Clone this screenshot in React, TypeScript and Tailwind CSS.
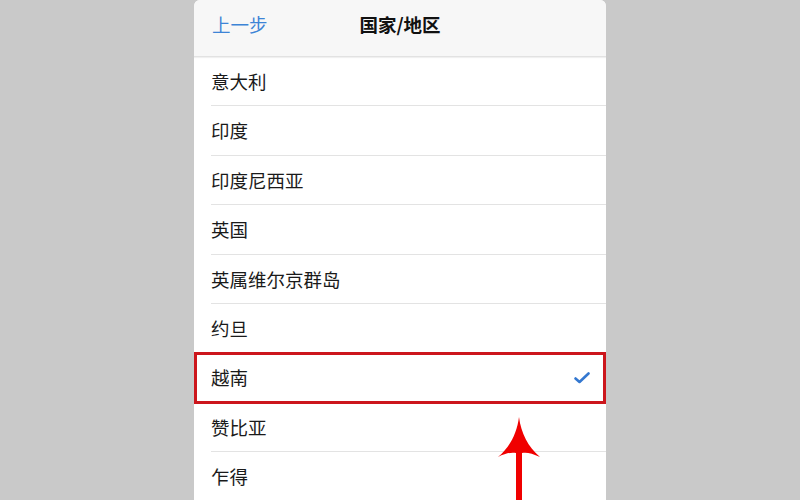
import React from "react";

const rows = ["意大利", "印度", "印度尼西亚", "英国", "英属维尔京群岛", "约旦", "越南", "赞比亚", "乍得"];

export default function App() {
  return (
    <div
      className="w-[800px] h-[500px] bg-[#c9c9c9] flex justify-center overflow-hidden"
      style={{ fontFamily: '"Noto Sans CJK SC", "Noto Sans", sans-serif' }}
    >
      <div className="w-[412px] h-[500px] bg-white flex flex-col rounded-t-[6px] overflow-hidden relative">
        <div className="h-[57px] shrink-0 bg-[#f7f7f7] border-b border-[#e2e2e2] shadow-[0_1px_1px_rgba(0,0,0,0.06)] relative flex items-center px-[18px]">
          <span className="text-[18.5px] text-[#3d84d6] leading-none -mt-[7px]">上一步</span>
          <span className="absolute left-0 right-0 text-center text-[18.5px] font-bold text-[#111] leading-none -mt-[7px]">国家/地区</span>
        </div>
        <div className="flex flex-col">
          {rows.map((r) => (
            <div key={r} className="relative h-[49.4px] shrink-0 pl-[17px] flex items-center">
              <span className="text-[18.5px] text-[#1a1a1a] leading-none -mt-[1px]">{r}</span>
              <div className="absolute left-[17px] right-0 bottom-0 h-px bg-[#e3e3e3]" />
              {r === "越南" && (
                <>
                  <svg className="absolute right-[16px] top-[19px]" width="16" height="12" viewBox="0 0 16 12">
                    <path d="M1.5 6.5 L5.5 10 L14.5 1.5" fill="none" stroke="#3478d0" strokeWidth="2.6" strokeLinecap="round" strokeLinejoin="round" />
                  </svg>
                  <div className="absolute left-0 right-0 -top-[1px] -bottom-[1px] border-[3px] border-[#cc161c]" />
                </>
              )}
            </div>
          ))}
        </div>
        <svg className="absolute left-[302px] top-[415px]" width="46" height="85" viewBox="0 0 46 85">
          <path d="M23 2 C 21 18, 14 32, 2 42 C 10 38, 16 37, 20 38 L20 85 L26 85 L26 38 C 30 37, 36 38, 44 42 C 32 32, 25 18, 23 2 Z" fill="#f00000" />
        </svg>
      </div>
    </div>
  );
}
